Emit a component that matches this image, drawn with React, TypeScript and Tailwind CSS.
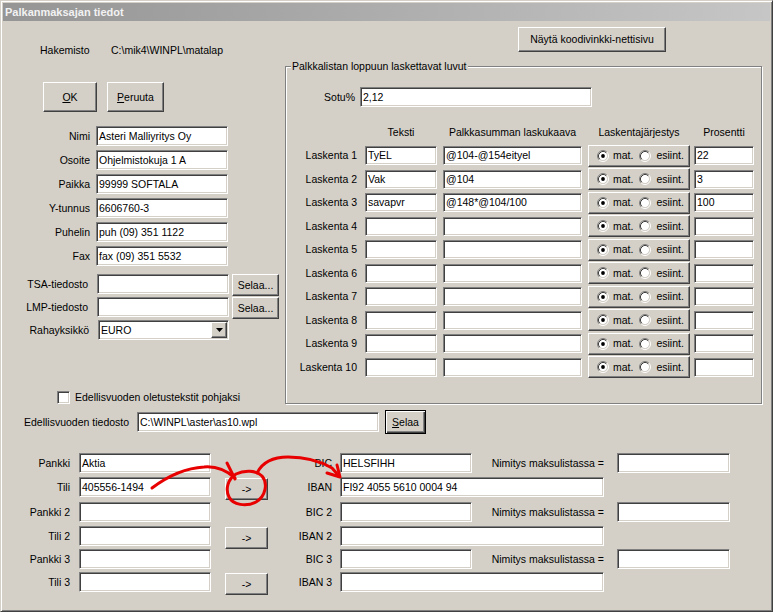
import React from 'react'

const sunken =
  'bg-white border border-t-[#808080] border-l-[#808080] border-r-white border-b-white shadow-[inset_1px_1px_0_#404040,inset_-1px_-1px_0_#d4d0c8]'
const raised =
  'bg-[#d4d0c8] border border-t-white border-l-white border-r-[#404040] border-b-[#404040] shadow-[inset_-1px_-1px_0_#808080]'

const Field = ({ w, value = '' }: { w: string; value?: string }) => (
  <div className={`${w} h-[20px] shrink-0 ${sunken} pl-[2px] flex items-center whitespace-nowrap overflow-hidden`}>
    {value}
  </div>
)

const Btn = ({ className, children }: { className: string; children: React.ReactNode }) => (
  <div className={`${className} ${raised} shrink-0 flex items-center justify-center whitespace-nowrap`}>{children}</div>
)

const Radio = ({ checked }: { checked?: boolean }) => (
  <svg width="12" height="12" viewBox="0 0 12 12" className="shrink-0">
    <circle cx="6" cy="6" r="4.2" fill="#fff" />
    <path d="M2.11 9.89 A5.5 5.5 0 0 1 9.89 2.11" stroke="#808080" fill="none" />
    <path d="M9.89 2.11 A5.5 5.5 0 0 1 2.11 9.89" stroke="#fff" fill="none" />
    <path d="M2.82 9.18 A4.5 4.5 0 0 1 9.18 2.82" stroke="#404040" fill="none" />
    <path d="M9.18 2.82 A4.5 4.5 0 0 1 2.82 9.18" stroke="#d4d0c8" fill="none" />
    {checked && <circle cx="6" cy="6" r="1.9" fill="#000" />}
  </svg>
)

const leftFields = [
  ['Nimi', 'Asteri Malliyritys Oy'],
  ['Osoite', 'Ohjelmistokuja 1 A'],
  ['Paikka', '99999 SOFTALA'],
  ['Y-tunnus', '6606760-3'],
  ['Puhelin', 'puh (09) 351 1122'],
  ['Fax', 'fax (09) 351 5532'],
]

const laskennat = [
  ['TyEL', '@104-@154eityel', '22'],
  ['Vak', '@104', '3'],
  ['savapvr', '@148*@104/100', '100'],
  ['', '', ''],
  ['', '', ''],
  ['', '', ''],
  ['', '', ''],
  ['', '', ''],
  ['', '', ''],
  ['', '', ''],
]

const banks = [
  { left: 'Pankki', lv: 'Aktia', right: 'BIC', rv: 'HELSFIHH', bic: true, mt: 'mt-0' },
  { left: 'Tili', lv: '405556-1494', right: 'IBAN', rv: 'FI92 4055 5610 0004 94', bic: false, mt: 'mt-[4px]' },
  { left: 'Pankki 2', lv: '', right: 'BIC 2', rv: '', bic: true, mt: 'mt-[5px]' },
  { left: 'Tili 2', lv: '', right: 'IBAN 2', rv: '', bic: false, mt: 'mt-[4px]' },
  { left: 'Pankki 3', lv: '', right: 'BIC 3', rv: '', bic: true, mt: 'mt-[3px]' },
  { left: 'Tili 3', lv: '', right: 'IBAN 3', rv: '', bic: false, mt: 'mt-[3px]' },
]

export default function App() {
  return (
    <div className="relative w-[781px] h-[613px] bg-white text-[10.5px] leading-[13px] text-black font-['Liberation_Sans',Arial,sans-serif]">
      <div className="w-[773px] h-[612px] bg-[#d4d0c8] border border-t-[#d4d0c8] border-l-[#d4d0c8] border-r-[#404040] border-b-[#404040] shadow-[inset_1px_1px_0_#fff,inset_-1px_-1px_0_#808080] p-[2px] flex flex-col">
        {/* title bar */}
        <div className="h-[18px] shrink-0 bg-gradient-to-r from-[#959595] to-[#c6c6c6] pl-[2px] flex items-center text-[11px] text-[#f2f2f2] font-bold">
          Palkanmaksajan tiedot
        </div>

        <div className="flex">
          {/* left column */}
          <div className="w-[282px] shrink-0 flex flex-col">
            <div className="mt-[22px] h-[14px] flex items-center">
              <span className="ml-[37px] w-[71px]">Hakemisto</span>
              <span>C:\mik4\WINPL\matalap</span>
            </div>
            <div className="mt-[25px] ml-[40px] flex gap-[10px]">
              <Btn className="w-[54px] h-[30px]">
                <span><u>O</u>K</span>
              </Btn>
              <Btn className="w-[57px] h-[30px]">
                <span><u>P</u>eruuta</span>
              </Btn>
            </div>
            <div className="mt-[14px] flex flex-col gap-[4px]">
              {leftFields.map(([l, v]) => (
                <div key={l} className="flex items-center h-[20px]">
                  <span className="w-[87px] text-right">{l}</span>
                  <div className="ml-[6px]">
                    <Field w="w-[132px]" value={v} />
                  </div>
                </div>
              ))}
            </div>
            <div className="mt-[8px] flex flex-col">
              {['TSA-tiedosto', 'LMP-tiedosto'].map((l) => (
                <div key={l} className="flex items-start h-[23px]">
                  <span className="w-[85px] text-right mt-[4px]">{l}</span>
                  <div className="ml-[9px]">
                    <Field w="w-[132px]" />
                  </div>
                  <Btn className="ml-[3px] w-[47px] h-[22px]">Selaa...</Btn>
                </div>
              ))}
              <div className="flex items-center h-[20px]">
                <span className="w-[86px] text-right">Rahayksikkö</span>
                <div className={`ml-[9px] w-[131px] h-[20px] ${sunken} flex items-center justify-between pl-[2px] pr-[1px]`}>
                  <span>EURO</span>
                  <Btn className="w-[16px] h-[16px]">
                    <svg width="7" height="4" viewBox="0 0 7 4">
                      <path d="M0 0 H7 L3.5 4 Z" fill="#000" />
                    </svg>
                  </Btn>
                </div>
              </div>
            </div>
            <div className="mt-[51px] ml-[54px] flex items-center gap-[5px]">
              <div className={`w-[13px] h-[13px] ${sunken}`} />
              <span>Edellisvuoden oletustekstit pohjaksi</span>
            </div>
          </div>

          {/* right column */}
          <div className="flex flex-col">
            <Btn className="mt-[6px] ml-[233px] w-[148px] h-[25px]">Näytä koodivinkki-nettisivu</Btn>
            <div className="relative mt-[14px] w-[477px] h-[338px] border border-[#808080] shadow-[inset_1px_1px_0_#fff,1px_1px_0_#fff]">
              <span className="absolute left-[5px] -top-[7px] px-[1px] bg-[#d4d0c8]">
                Palkkalistan loppuun laskettavat luvut
              </span>
              <div className="mt-[20px] flex items-center h-[20px]">
                <span className="w-[69px] text-right">Sotu%</span>
                <div className="ml-[5px]">
                  <Field w="w-[232px]" value="2,12" />
                </div>
              </div>
              <div className="mt-[18px] flex h-[14px] items-center">
                <span className="w-[71px]" />
                <span className="ml-[8px] w-[72px] text-center">Teksti</span>
                <span className="ml-[6px] w-[139px] text-center">Palkkasumman laskukaava</span>
                <span className="ml-[6px] w-[102px] text-center">Laskentajärjestys</span>
                <span className="ml-[4px] w-[60px] text-center">Prosentti</span>
              </div>
              <div className="mt-[7px] flex flex-col gap-[4.5px]">
                {laskennat.map(([t, f, p], i) => (
                  <div key={i} className="flex items-center h-[19px]">
                    <span className="w-[71px] text-right">Laskenta {i + 1}</span>
                    <div className={`ml-[8px] w-[72px] h-[19px] ${sunken} pl-[2px] flex items-center`}>{t}</div>
                    <div className={`ml-[6px] w-[139px] h-[19px] ${sunken} pl-[2px] flex items-center`}>{f}</div>
                    <div className={`ml-[6px] w-[102px] h-[22px] ${raised} pl-[8px] flex items-center whitespace-nowrap`}>
                      <Radio checked />
                      <span className="ml-[4px]">mat.</span>
                      <span className="ml-[6px] flex">
                        <Radio />
                      </span>
                      <span className="ml-[5px]">esiint.</span>
                    </div>
                    <div className={`ml-[4px] w-[60px] h-[19px] ${sunken} pl-[2px] flex items-center`}>{p}</div>
                  </div>
                ))}
              </div>
            </div>
          </div>
        </div>

        {/* previous year file */}
        <div className="mt-[6px] h-[24px] flex items-center">
          <span className="ml-[21px] w-[113px]">Edellisvuoden tiedosto</span>
          <Field w="w-[242px]" value="C:\WINPL\aster\as10.wpl" />
          <div className="ml-[6px] w-[41px] h-[24px] bg-[#d4d0c8] border border-black shadow-[inset_1px_1px_0_#fff,inset_-1px_-1px_0_#404040,inset_-2px_-2px_0_#808080] flex items-center justify-center">
            <span><u>S</u>elaa</span>
          </div>
        </div>

        {/* bank accounts */}
        <div className="mt-[19px] flex flex-col">
          {banks.map((b) => (
            <div key={b.left} className={`${b.mt} flex items-start h-[20px]`}>
              <span className="w-[67px] text-right mt-[4px]">{b.left}</span>
              <div className="ml-[9px]">
                <Field w="w-[132px]" value={b.lv} />
              </div>
              <div className="ml-[14px] w-[43px] shrink-0">
                {!b.bic && <Btn className="w-[43px] h-[22px] mt-[1px]">-&gt;</Btn>}
              </div>
              <span className="w-[64px] text-right mt-[4px]">{b.right}</span>
              <div className="ml-[8px]">
                <Field w={b.bic ? 'w-[132px]' : 'w-[264px]'} value={b.rv} />
              </div>
              {b.bic && (
                <>
                  <span className="w-[132px] text-right mt-[4px]">Nimitys maksulistassa =</span>
                  <div className="ml-[13px]">
                    <Field w="w-[113px]" />
                  </div>
                </>
              )}
            </div>
          ))}
        </div>
      </div>

      {/* hand-drawn red annotation */}
      <svg className="absolute left-0 top-0 pointer-events-none" width="781" height="613" viewBox="0 0 781 613">
        <g stroke="#e80000" strokeWidth="3" fill="none" strokeLinecap="round" strokeLinejoin="round">
          <path d="M152 488 C168 476 186 468 204 467 C216 466 226 470 235 478" />
          <path d="M227 463 L235 479" />
          <path d="M236 474 C244 470 256 470 262 476 C268 483 266 496 256 502 C246 507 233 505 229 497 C225 489 228 479 236 474" />
          <path d="M257 473 C262 463 272 457 288 457 C305 457 320 461 332 468 L339 476" />
          <path d="M327 473 L340 477 L337 465" />
        </g>
      </svg>
    </div>
  )
}
